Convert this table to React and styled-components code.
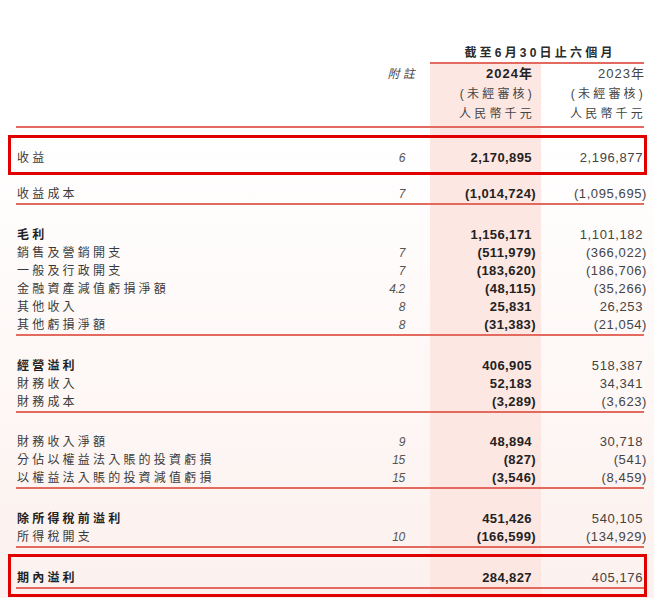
import React from "react";
import styled, { createGlobalStyle } from "styled-components";

const GlobalStyle = createGlobalStyle`
  html, body {
    margin: 0;
    padding: 0;
  }
  body {
    width: 654px;
    height: 598px;
    overflow: hidden;
    background: linear-gradient(180deg, #ffffff 0%, #ffffff 22%, #fcf1ee 100%);
    font-family: "Liberation Sans", "Noto Sans CJK TC", sans-serif;
    color: #3a3a3a;
  }
`;

const COLS = "364px 50px 111px 103px";
const RED_LINE = "2px solid #e36a5f";

const Page = styled.div`
  width: 654px;
  box-sizing: border-box;
  padding: 44px 10px 0 16px;
`;

const Table = styled.div`
  width: 628px;
`;

const TitleRow = styled.div`
  display: grid;
  grid-template-columns: ${COLS};
`;

const Title = styled.div`
  grid-column: 3 / 5;
  text-align: center;
  padding-left: 6px;
  font-size: 12px;
  font-weight: 700;
  letter-spacing: 3.2px;
  line-height: 18px;
  color: #2a2a2a;
  border-bottom: ${RED_LINE};
`;

/* pink band behind the current period column */
const Body = styled.div`
  background: linear-gradient(
    90deg,
    transparent 414px,
    #fde7e2 414px,
    #fde7e2 525px,
    transparent 525px
  );
  padding-bottom: 20px;
`;

const HeadBlock = styled.div`
  padding-bottom: 2px;
  border-bottom: ${RED_LINE};
`;

const HeadRow = styled.div`
  display: grid;
  grid-template-columns: ${COLS};
  line-height: 20px;
  height: 20px;
`;

const HeadCell = styled.div`
  grid-column: ${p => p.$col};
  text-align: right;
  white-space: nowrap;
  font-size: ${p => (p.$num ? 13 : 12)}px;
  font-weight: ${p => (p.$bold ? 700 : 400)};
  font-style: ${p => (p.$italic ? "italic" : "normal")};
  letter-spacing: ${p => (p.$num ? 1 : 3.2)}px;
  padding-right: ${p => p.$pr}px;
  margin-right: ${p => p.$mr || 0}px;
  color: ${p => (p.$bold ? "#222" : "#444")};
`;

const Section = styled.div`
  margin-top: ${p => p.$gap || 0}px;
  border-bottom: ${p => (p.$line ? RED_LINE : "none")};
`;

const Boxed = styled.div`
  margin: ${p => p.$gap}px -3px 0 -8px;
  padding: ${p => p.$pt}px 0 ${p => p.$pb}px 5px;
  border: 3px solid #e10000;
`;

const Row = styled.div`
  display: grid;
  grid-template-columns: ${COLS};
  align-items: center;
  height: 18px;
  line-height: 18px;
`;

const Label = styled.div`
  font-size: 12px;
  letter-spacing: 3.2px;
  white-space: nowrap;
  padding-left: 1px;
  font-weight: ${p => (p.$bold ? 700 : 400)};
  color: ${p => (p.$bold ? "#222" : "#3a3a3a")};
`;

const Note = styled.div`
  text-align: right;
  padding-right: 25px;
  font-size: 12px;
  font-style: italic;
  letter-spacing: -0.3px;
  color: #555;
`;

const Num = styled.div`
  text-align: right;
  white-space: nowrap;
  font-size: 13px;
  font-weight: ${p => (p.$cur ? 700 : 400)};
  letter-spacing: ${p => (p.$cur ? 0.4 : 0.6)}px;
  padding-right: ${p => (p.$cur ? 9 : 1)}px;
  color: ${p => (p.$cur ? "#222" : "#444")};
`;

const Hang = styled.span`
  margin-right: -4px;
`;

const Amount = ({ value, cur }) => {
  const neg = value.startsWith("(");
  return (
    <Num $cur={cur}>
      {neg ? (
        <>
          {value.slice(0, -1)}
          <Hang>)</Hang>
        </>
      ) : (
        value
      )}
    </Num>
  );
};

const LineItem = ({ label, note, cur, prev, bold }) => (
  <Row>
    <Label $bold={bold}>{label}</Label>
    <Note>{note}</Note>
    <Amount value={cur} cur />
    <Amount value={prev} />
  </Row>
);

const groups = [
  {
    gap: 9.5,
    line: true,
    rows: [{ label: "收益成本", note: "7", cur: "(1,014,724)", prev: "(1,095,695)" }],
  },
  {
    gap: 21,
    line: true,
    rows: [
      { label: "毛利", bold: true, note: "", cur: "1,156,171", prev: "1,101,182" },
      { label: "銷售及營銷開支", note: "7", cur: "(511,979)", prev: "(366,022)" },
      { label: "一般及行政開支", note: "7", cur: "(183,620)", prev: "(186,706)" },
      { label: "金融資產減值虧損淨額", note: "4.2", cur: "(48,115)", prev: "(35,266)" },
      { label: "其他收入", note: "8", cur: "25,831", prev: "26,253" },
      { label: "其他虧損淨額", note: "8", cur: "(31,383)", prev: "(21,054)" },
    ],
  },
  {
    gap: 21.5,
    line: true,
    rows: [
      { label: "經營溢利", bold: true, note: "", cur: "406,905", prev: "518,387" },
      { label: "財務收入", note: "", cur: "52,183", prev: "34,341" },
      { label: "財務成本", note: "", cur: "(3,289)", prev: "(3,623)" },
    ],
  },
  {
    gap: 20.2,
    line: true,
    rows: [
      { label: "財務收入淨額", note: "9", cur: "48,894", prev: "30,718" },
      { label: "分佔以權益法入賬的投資虧損", note: "15", cur: "(827)", prev: "(541)" },
      { label: "以權益法入賬的投資減值虧損", note: "15", cur: "(3,546)", prev: "(8,459)" },
    ],
  },
  {
    gap: 21.3,
    line: true,
    rows: [
      { label: "除所得稅前溢利", bold: true, note: "", cur: "451,426", prev: "540,105" },
      { label: "所得稅開支", note: "10", cur: "(166,599)", prev: "(134,929)" },
    ],
  },
];

const App = () => (
  <>
    <GlobalStyle />
    <Page>
      <Table>
        <TitleRow>
          <Title>截至6月30日止六個月</Title>
        </TitleRow>
        <Body>
          <HeadBlock>
            <HeadRow>
              <HeadCell $col={2} $italic $pr={12}>附註</HeadCell>
              <HeadCell $col={3} $num $bold $pr={8}>2024年</HeadCell>
              <HeadCell $col={4} $num $pr={0} $mr={-1}>2023年</HeadCell>
            </HeadRow>
            <HeadRow>
              <HeadCell $col={3} $pr={6}>(未經審核)</HeadCell>
              <HeadCell $col={4} $pr={0} $mr={-2}>(未經審核)</HeadCell>
            </HeadRow>
            <HeadRow>
              <HeadCell $col={3} $pr={6}>人民幣千元</HeadCell>
              <HeadCell $col={4} $pr={0} $mr={-2}>人民幣千元</HeadCell>
            </HeadRow>
          </HeadBlock>

          <Boxed $gap={7} $pt={10.5} $pb={5.5}>
            <LineItem label="收益" note="6" cur="2,170,895" prev="2,196,877" />
          </Boxed>

          {groups.map((g, i) => (
            <Section key={i} $gap={g.gap} $line={g.line}>
              {g.rows.map((r, j) => (
                <LineItem key={j} {...r} />
              ))}
            </Section>
          ))}

          <Boxed $gap={6} $pt={11.3} $pb={5}>
            <Section $line>
              <LineItem label="期內溢利" bold note="" cur="284,827" prev="405,176" />
            </Section>
          </Boxed>
        </Body>
      </Table>
    </Page>
  </>
);

export default App;
